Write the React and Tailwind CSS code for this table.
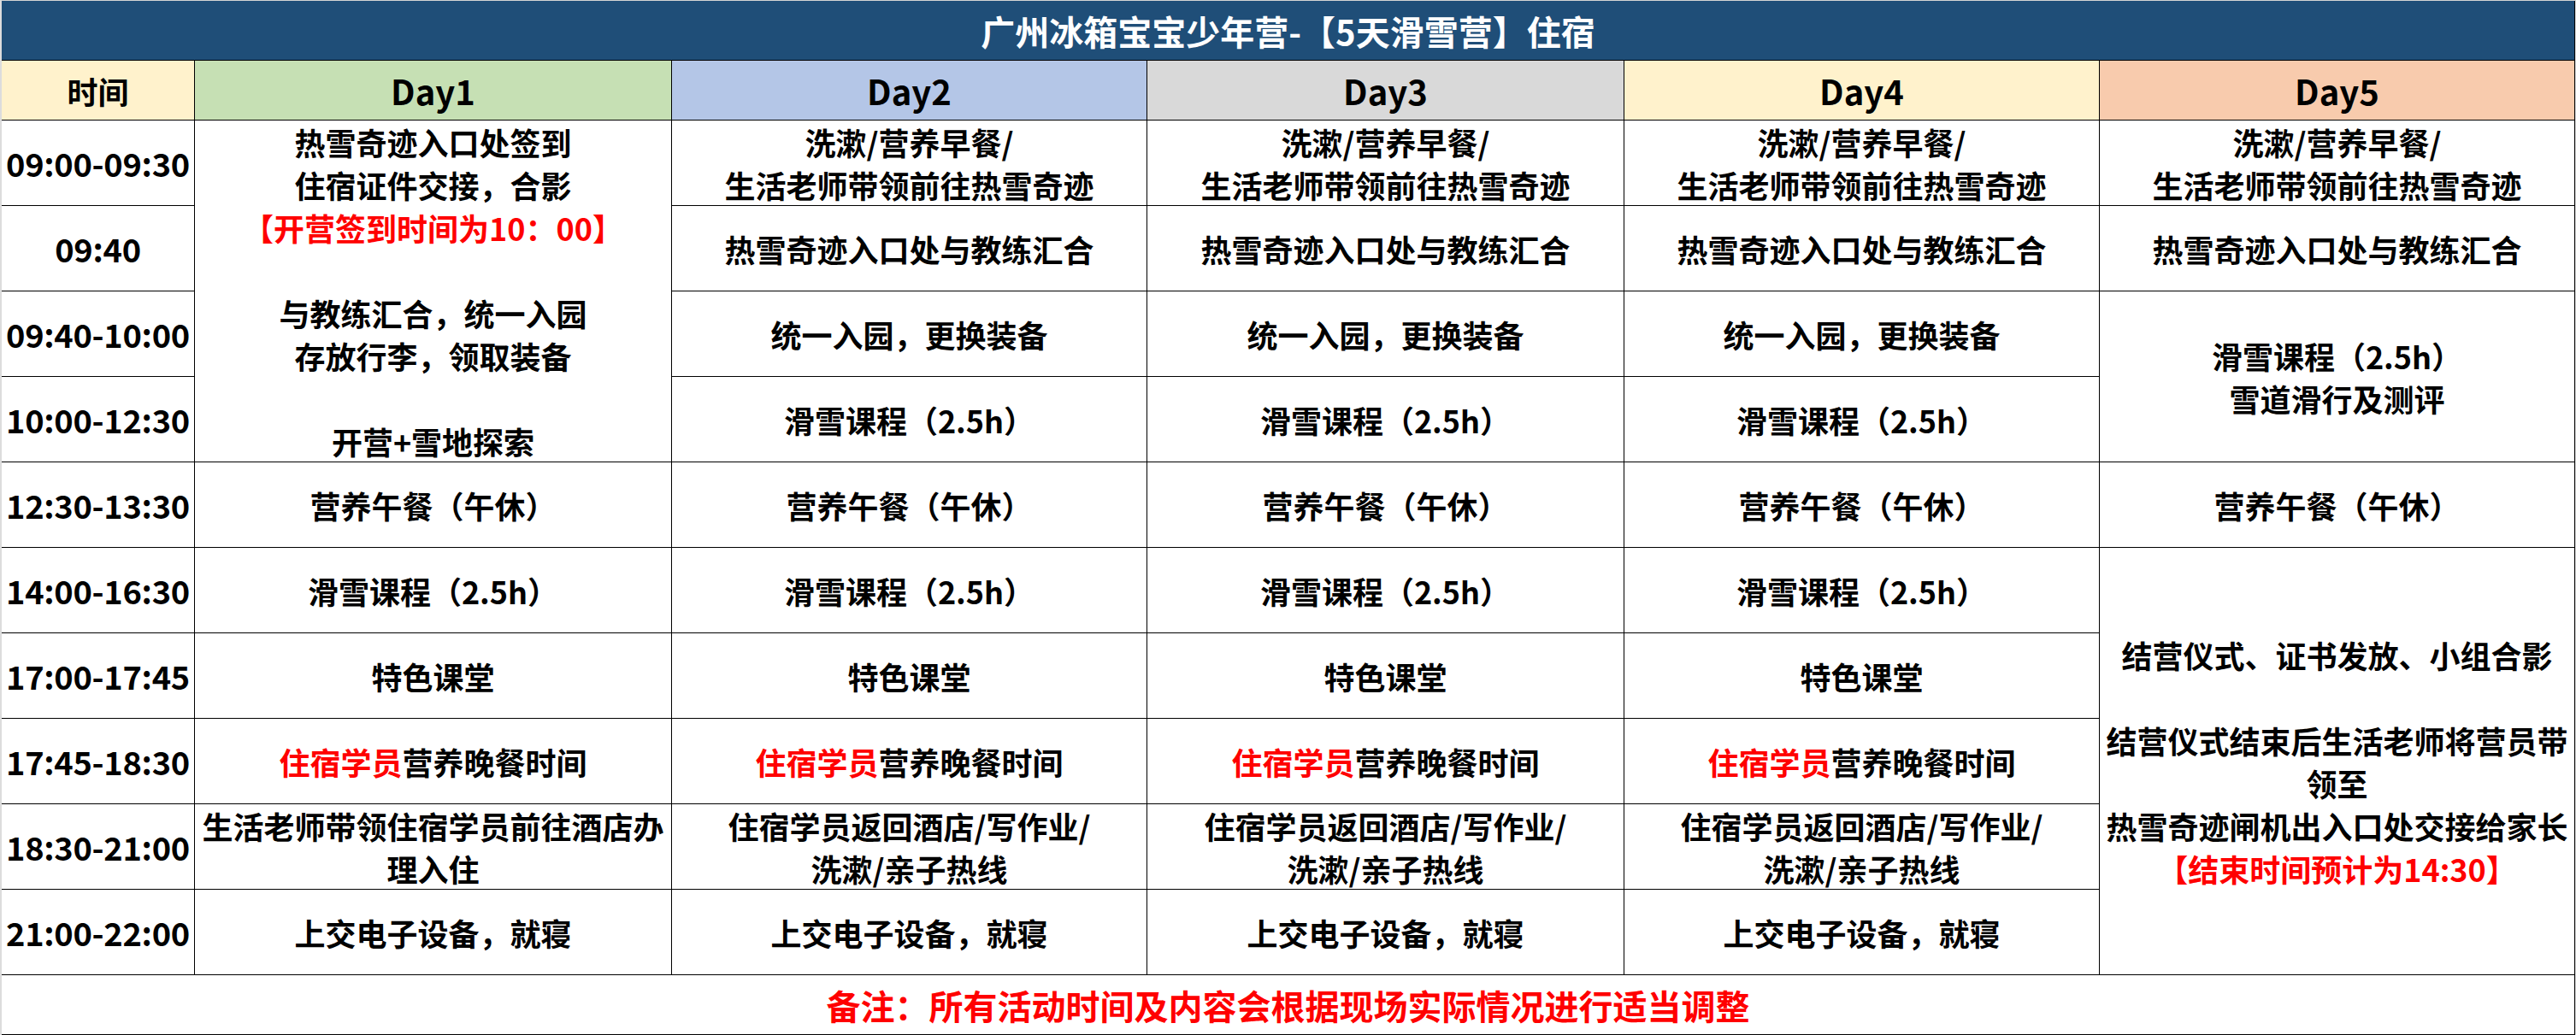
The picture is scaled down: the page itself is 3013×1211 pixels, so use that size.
import React from "react";

const R = ({ children }) => <span className="text-[#ff0000]">{children}</span>;

function Cell({ lines, className = "" }) {
  return (
    <div
      className={
        "bg-white flex flex-col items-center justify-center text-center text-[36px] leading-[50px] font-bold text-black whitespace-nowrap " +
        className
      }
    >
      {lines.map((l, i) => (
        <div key={i}>{l === "" ? "\u00a0" : l}</div>
      ))}
    </div>
  );
}

function Time({ t }) {
  return (
    <div className="bg-white flex items-center justify-center text-[38px] tracking-[-0.3px] font-bold text-black whitespace-nowrap">
      {t}
    </div>
  );
}

const wash = ["洗漱/营养早餐/", "生活老师带领前往热雪奇迹"];
const meet = ["热雪奇迹入口处与教练汇合"];
const enter = ["统一入园，更换装备"];
const ski = ["滑雪课程（2.5h）"];
const lunch = ["营养午餐（午休）"];
const special = ["特色课堂"];
const dinner = [
  <>
    <R>住宿学员</R>营养晚餐时间
  </>,
];
const hotel = ["住宿学员返回酒店/写作业/", "洗漱/亲子热线"];
const sleep = ["上交电子设备，就寝"];

export default function App() {
  return (
    <div className="w-[3013px] h-[1211px] bg-white border-t border-t-[#d4d4d4] border-l-2 border-l-[#dcdcdc] border-r border-r-[#dcdcdc] font-['Noto_Sans_CJK_SC',sans-serif]">
      <div className="grid grid-cols-[225px_557px_555px_557px_555px_555px] grid-rows-[69px_69px_repeat(10,99px)_69px] gap-px bg-black pr-px pb-px">
        <div className="col-span-6 bg-[#1f4e78] text-white text-[40px] font-bold flex items-center justify-center whitespace-nowrap">
          广州冰箱宝宝少年营-【5天滑雪营】住宿
        </div>

        <div className="bg-[#fff2cc] flex items-center justify-center text-[36px] font-bold text-black">时间</div>
        <div className="bg-[#c6e0b4] flex items-center justify-center text-[40px] font-bold text-black">Day1</div>
        <div className="bg-[#b4c6e7] flex items-center justify-center text-[40px] font-bold text-black">Day2</div>
        <div className="bg-[#d9d9d9] flex items-center justify-center text-[40px] font-bold text-black">Day3</div>
        <div className="bg-[#fff2cc] flex items-center justify-center text-[40px] font-bold text-black">Day4</div>
        <div className="bg-[#f8cbad] flex items-center justify-center text-[40px] font-bold text-black">Day5</div>

        {/* row 1 */}
        <Time t="09:00-09:30" />
        <Cell
          className="row-span-4"
          lines={[
            "热雪奇迹入口处签到",
            "住宿证件交接，合影",
            <R>【开营签到时间为10：00】</R>,
            "",
            "与教练汇合，统一入园",
            "存放行李，领取装备",
            "",
            "开营+雪地探索",
          ]}
        />
        <Cell lines={wash} />
        <Cell lines={wash} />
        <Cell lines={wash} />
        <Cell lines={wash} />

        {/* row 2 */}
        <Time t="09:40" />
        <Cell lines={meet} />
        <Cell lines={meet} />
        <Cell lines={meet} />
        <Cell lines={meet} />

        {/* row 3 */}
        <Time t="09:40-10:00" />
        <Cell lines={enter} />
        <Cell lines={enter} />
        <Cell lines={enter} />
        <Cell className="row-span-2" lines={["滑雪课程（2.5h）", "雪道滑行及测评"]} />

        {/* row 4 */}
        <Time t="10:00-12:30" />
        <Cell lines={ski} />
        <Cell lines={ski} />
        <Cell lines={ski} />

        {/* row 5 */}
        <Time t="12:30-13:30" />
        <Cell lines={lunch} />
        <Cell lines={lunch} />
        <Cell lines={lunch} />
        <Cell lines={lunch} />
        <Cell lines={lunch} />

        {/* row 6 */}
        <Time t="14:00-16:30" />
        <Cell lines={ski} />
        <Cell lines={ski} />
        <Cell lines={ski} />
        <Cell lines={ski} />
        <Cell
          className="row-span-5"
          lines={[
            "结营仪式、证书发放、小组合影",
            "",
            "结营仪式结束后生活老师将营员带",
            "领至",
            "热雪奇迹闸机出入口处交接给家长",
            <R>【结束时间预计为14:30】</R>,
          ]}
        />

        {/* row 7 */}
        <Time t="17:00-17:45" />
        <Cell lines={special} />
        <Cell lines={special} />
        <Cell lines={special} />
        <Cell lines={special} />

        {/* row 8 */}
        <Time t="17:45-18:30" />
        <Cell lines={dinner} />
        <Cell lines={dinner} />
        <Cell lines={dinner} />
        <Cell lines={dinner} />

        {/* row 9 */}
        <Time t="18:30-21:00" />
        <Cell lines={["生活老师带领住宿学员前往酒店办", "理入住"]} />
        <Cell lines={hotel} />
        <Cell lines={hotel} />
        <Cell lines={hotel} />

        {/* row 10 */}
        <Time t="21:00-22:00" />
        <Cell lines={sleep} />
        <Cell lines={sleep} />
        <Cell lines={sleep} />
        <Cell lines={sleep} />

        <div className="col-span-6 bg-white flex items-center justify-center text-[40px] font-bold text-[#ff0000] whitespace-nowrap">
          备注：所有活动时间及内容会根据现场实际情况进行适当调整
        </div>
      </div>
    </div>
  );
}
